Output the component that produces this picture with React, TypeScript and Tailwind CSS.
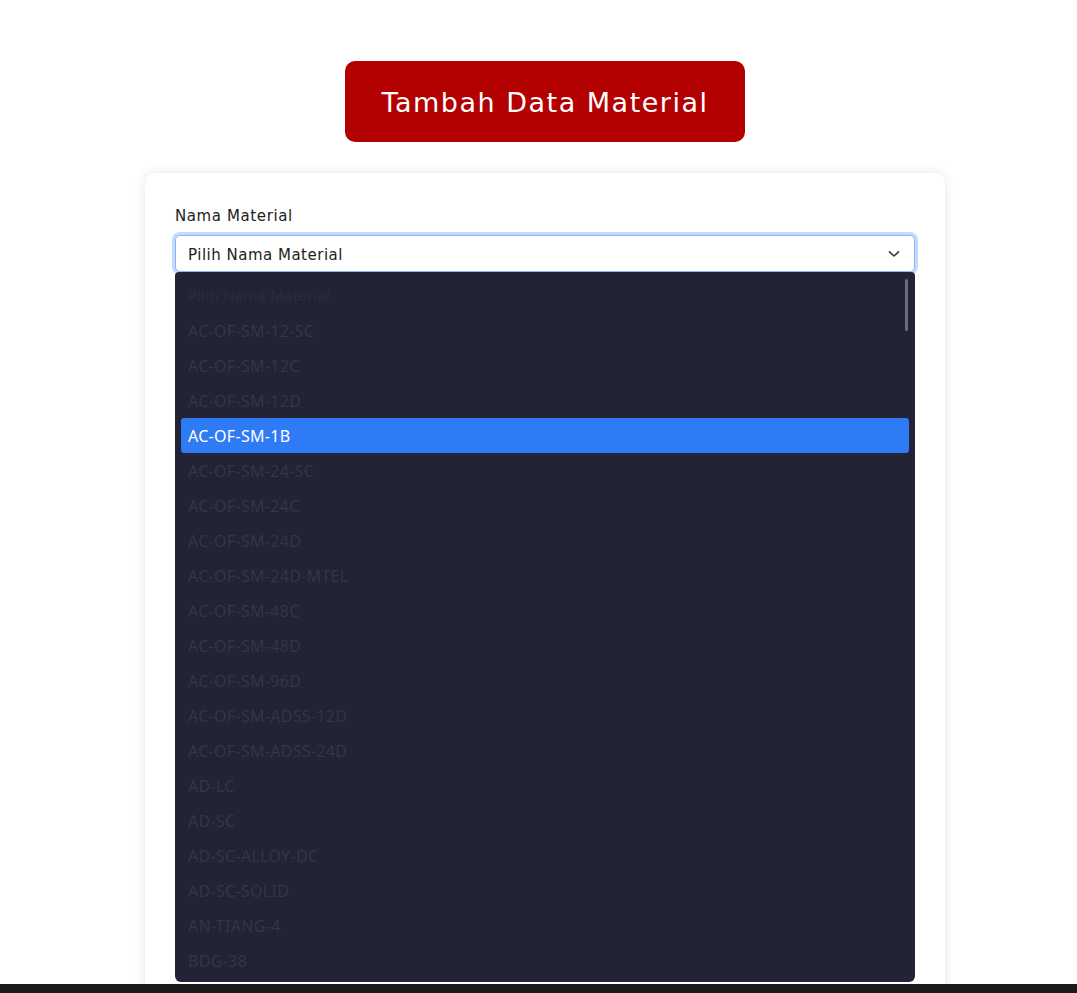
import React from "react";

const items = [
  "AC-OF-SM-12-SC",
  "AC-OF-SM-12C",
  "AC-OF-SM-12D",
  "AC-OF-SM-1B",
  "AC-OF-SM-24-SC",
  "AC-OF-SM-24C",
  "AC-OF-SM-24D",
  "AC-OF-SM-24D-MTEL",
  "AC-OF-SM-48C",
  "AC-OF-SM-48D",
  "AC-OF-SM-96D",
  "AC-OF-SM-ADSS-12D",
  "AC-OF-SM-ADSS-24D",
  "AD-LC",
  "AD-SC",
  "AD-SC-ALLOY-DC",
  "AD-SC-SOLID",
  "AN-TIANG-4",
  "BDG-38",
];

export default function App() {
  return (
    <div className="h-[993px] w-full overflow-hidden bg-white flex flex-col" style={{ fontFamily: '"DejaVu Sans", sans-serif' }}>
      <div className="flex-1 overflow-hidden">
        <div className="w-[1090px] flex flex-col items-center pt-[61px]">
          <button className="w-[400px] h-[81px] rounded-[10px] bg-[#b30000] text-white text-[27px] tracking-[1.5px] pt-[3px]">
            Tambah Data Material
          </button>
          <div className="mt-[31px] w-[800px] h-[900px] rounded-[10px] bg-white shadow-[0_0_12px_rgba(0,0,0,0.1)] px-[30px] pt-[32px]">
            <div className="text-[15px] text-[#222] leading-[22px] tracking-[0.6px]">Nama Material</div>
            <div className="mt-[8px] relative">
              <div className="h-[37px] rounded-[5px] border border-[#86b7fe] ring-[3px] ring-[#c2dbfe] bg-white flex items-center justify-between pl-[12px] pr-[14px] text-[15px] text-[#222]">
                <span className="tracking-[0.5px] pt-[3px]">Pilih Nama Material</span>
                <svg width="12" height="8" viewBox="0 0 12 8" fill="none" stroke="#343a40" strokeWidth="1.6" strokeLinecap="round" strokeLinejoin="round">
                  <path d="M1.5 1.8 L6 6 L10.5 1.8" />
                </svg>
              </div>
              <div className="absolute left-0 right-0 top-[37px] h-[710px] rounded-b-[6px] rounded-t-[4px] bg-[#222335] overflow-hidden px-[6px] pt-[6px]" style={{ fontFamily: '"Noto Sans", sans-serif' }}>
                <div className="absolute right-[7px] top-[7px] w-[3px] h-[52px] rounded-full bg-[#6b6c78]" />
                <div className="h-[35px] flex items-center px-[7px] text-[15px] tracking-[0.2px] text-[#2c2d3c]">Pilih Nama Material</div>
                {items.map((it) => {
                  const active = it === "AC-OF-SM-1B";
                  return (
                    <div
                      key={it}
                      className={
                        active
                          ? "h-[35px] flex items-center px-[7px] text-[16px] tracking-[0.3px] text-white bg-[#2f7bf5] rounded-[3px]"
                          : "h-[35px] flex items-center px-[7px] text-[16px] tracking-[0.3px] text-[#35363f]"
                      }
                    >
                      {it}
                    </div>
                  );
                })}
              </div>
            </div>
          </div>
        </div>
      </div>
      <div className="h-[9px] bg-[#1b1b1b]" />
    </div>
  );
}
